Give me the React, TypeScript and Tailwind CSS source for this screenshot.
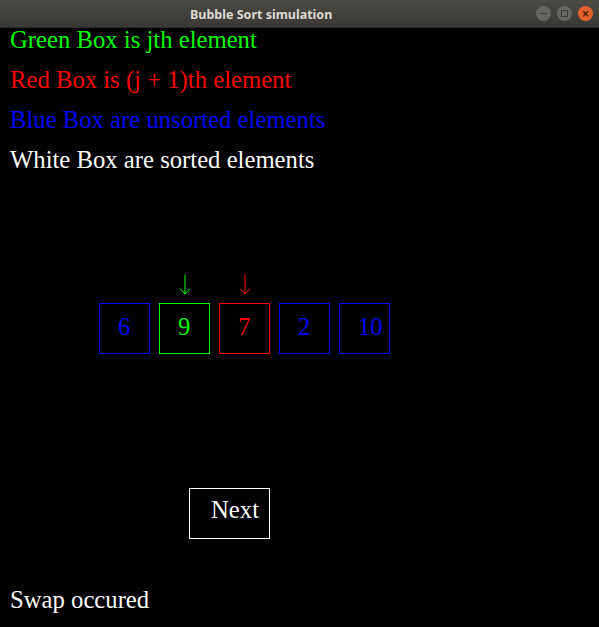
import React from 'react';

const values = [6, 9, 7, 2, 10];

const boxColor = (i: number) =>
  i === 1
    ? 'border-[#00ff00] text-[#00ff00]'
    : i === 2
    ? 'border-[#ff0000] text-[#ff0000]'
    : 'border-[#0000ff] text-[#0000ff]';

const Arrow: React.FC<{ color: string }> = ({ color }) => (
  <svg width="12" height="21" viewBox="0 0 12 21" fill="none" stroke={color} strokeWidth="1">
    <path d="M6 0.5 V20" />
    <path d="M1 14.5 L6 20 L11 14.5" />
  </svg>
);

const TitleBar: React.FC = () => (
  <div className="h-[28px] bg-gradient-to-b from-[#4b4a45] to-[#393834] border-b border-[#2a2a28] flex items-center relative">
    <div className="pl-[190px] text-[12.5px] font-bold text-[#dfdbd2] leading-[13px] pt-[1px]" style={{ fontFamily: '"Noto Sans", "DejaVu Sans", sans-serif' }}>
      Bubble Sort simulation
    </div>
    <div className="absolute right-[6px] top-[6px] flex gap-[6px]">
      <div className="w-[15px] h-[15px] rounded-full bg-[#66655f] flex items-center justify-center">
        <div className="w-[7px] h-[1px] bg-[#3a3935]" />
      </div>
      <div className="w-[15px] h-[15px] rounded-full bg-[#66655f] flex items-center justify-center">
        <div className="w-[7px] h-[7px] border border-[#3a3935]" />
      </div>
      <div className="w-[15px] h-[15px] rounded-full bg-[#e9602f] flex items-center justify-center text-[#3a1a0c] text-[10px] leading-none font-bold" style={{ fontFamily: '"DejaVu Sans", sans-serif' }}>
        ×
      </div>
    </div>
  </div>
);

export default function App() {
  return (
    <div className="w-[599px] h-[627px] bg-black overflow-hidden" style={{ fontFamily: '"Liberation Serif", "Times New Roman", serif' }}>
      <TitleBar />
      <div className="flex flex-col text-[24.7px] leading-[24px]">
        <div className="flex flex-col gap-[16px] pl-[10px]">
          <div className="text-[#00ff00]">Green Box is jth element</div>
          <div className="text-[#ff0000]">Red Box is (j + 1)th element</div>
          <div className="text-[#0000ff]">Blue Box are unsorted elements</div>
          <div className="text-white">White Box are sorted elements</div>
        </div>

        <div className="flex gap-[9px] pl-[99px] mt-[102px] h-[20px]">
          {values.map((_, i) => (
            <div key={i} className="w-[51px] flex justify-center">
              {i === 1 && <Arrow color="#00ff00" />}
              {i === 2 && <Arrow color="#ff0000" />}
            </div>
          ))}
        </div>

        <div className="flex gap-[9px] pl-[99px] mt-[9px]">
          {values.map((v, i) => (
            <div key={i} className={`w-[51px] h-[51px] border pl-[18px] pt-[11px] ${boxColor(i)}`}>
              {v}
            </div>
          ))}
        </div>

        <div className="pl-[189px] mt-[134px]">
          <div className="w-[81px] h-[51px] border border-white text-white pl-[21px] pt-[9px]">Next</div>
        </div>

        <div className="pl-[10px] mt-[49px] text-white">Swap occured</div>
      </div>
    </div>
  );
}
